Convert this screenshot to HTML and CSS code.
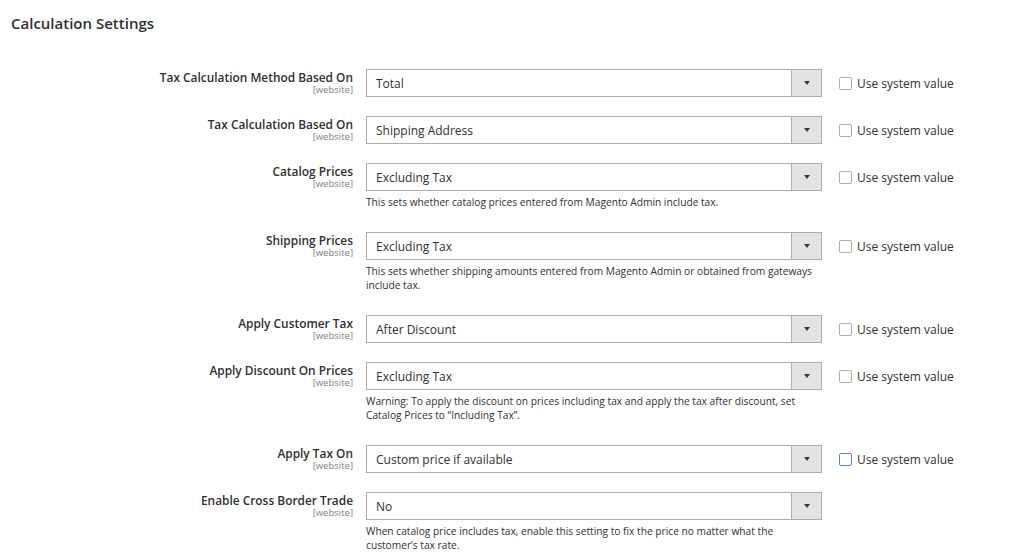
FILE: index.html
```html
<!DOCTYPE html>
<html>
<head>
    <title>Calculation Settings</title>
    <link rel="stylesheet" href="styles.css">
</head>
<body>
    <h2 class="section-title">Calculation Settings</h2>

    <div class="config-form">
        <div class="row">
            <div class="label">Tax Calculation Method Based On<span class="scope">[website]</span></div>
            <div class="field">
                <div class="select"><span class="value">Total</span><span class="arrow"></span></div>
            </div>
            <label class="use-default"><span class="checkbox"></span>Use system value</label>
        </div>

        <div class="row">
            <div class="label">Tax Calculation Based On<span class="scope">[website]</span></div>
            <div class="field">
                <div class="select"><span class="value">Shipping Address</span><span class="arrow"></span></div>
            </div>
            <label class="use-default"><span class="checkbox"></span>Use system value</label>
        </div>

        <div class="row">
            <div class="label">Catalog Prices<span class="scope">[website]</span></div>
            <div class="field">
                <div class="select"><span class="value">Excluding Tax</span><span class="arrow"></span></div>
                <p class="note">This sets whether catalog prices entered from Magento Admin include tax.</p>
            </div>
            <label class="use-default"><span class="checkbox"></span>Use system value</label>
        </div>

        <div class="row">
            <div class="label">Shipping Prices<span class="scope">[website]</span></div>
            <div class="field">
                <div class="select"><span class="value">Excluding Tax</span><span class="arrow"></span></div>
                <p class="note">This sets whether shipping amounts entered from Magento Admin or obtained from gateways include tax.</p>
            </div>
            <label class="use-default"><span class="checkbox"></span>Use system value</label>
        </div>

        <div class="row">
            <div class="label">Apply Customer Tax<span class="scope">[website]</span></div>
            <div class="field">
                <div class="select"><span class="value">After Discount</span><span class="arrow"></span></div>
            </div>
            <label class="use-default"><span class="checkbox"></span>Use system value</label>
        </div>

        <div class="row">
            <div class="label">Apply Discount On Prices<span class="scope">[website]</span></div>
            <div class="field">
                <div class="select"><span class="value">Excluding Tax</span><span class="arrow"></span></div>
                <p class="note">Warning: To apply the discount on prices including tax and apply the tax after discount, set Catalog Prices to “Including Tax”.</p>
            </div>
            <label class="use-default"><span class="checkbox"></span>Use system value</label>
        </div>

        <div class="row">
            <div class="label">Apply Tax On<span class="scope">[website]</span></div>
            <div class="field">
                <div class="select"><span class="value">Custom price if available</span><span class="arrow"></span></div>
            </div>
            <label class="use-default"><span class="checkbox focused"></span>Use system value</label>
        </div>

        <div class="row">
            <div class="label">Enable Cross Border Trade<span class="scope">[website]</span></div>
            <div class="field">
                <div class="select"><span class="value">No</span><span class="arrow"></span></div>
                <p class="note">When catalog price includes tax, enable this setting to fix the price no matter what the customer’s tax rate.</p>
            </div>
        </div>
    </div>
</body>
</html>
```

FILE: styles.css
```css
body {
    margin: 0;
    background: #fff;
    color: #303030;
    font-family: "Open Sans", Arial, sans-serif;
}

.section-title {
    margin: 13px 0 0 11px;
    font-size: 15px;
    line-height: 20px;
    font-weight: 600;
    color: #303030;
}

.config-form {
    display: flex;
    flex-direction: column;
    gap: 19px;
    margin-top: 36px;
}

.row {
    display: flex;
    align-items: flex-start;
}

.label {
    width: 353px;
    flex-shrink: 0;
    text-align: right;
    font-size: 11.9px;
    line-height: 16px;
    font-weight: 600;
    color: #303030;
}

.scope {
    display: block;
    font-size: 9.5px;
    line-height: 9px;
    font-weight: 400;
    color: #808080;
}

.field {
    width: 456px;
    margin-left: 13px;
    flex-shrink: 0;
}

.select {
    display: flex;
    height: 28px;
    box-sizing: border-box;
    border: 1px solid #adadad;
    background: #fff;
}

.select .value {
    flex: 1;
    padding-left: 9px;
    font-size: 12px;
    line-height: 27px;
    color: #303030;
}

.select .arrow {
    width: 29px;
    border-left: 1px solid #adadad;
    background: #e3e3e3;
    display: flex;
    align-items: center;
    justify-content: center;
}

.select .arrow::after {
    content: "";
    border-left: 3px solid transparent;
    border-right: 3px solid transparent;
    border-top: 4px solid #41362f;
}

.note {
    margin: 4px 0 4px;
    font-size: 10.2px;
    line-height: 14px;
    color: #303030;
}

.use-default {
    display: flex;
    align-items: center;
    gap: 5px;
    margin-left: 17px;
    height: 28px;
    font-size: 12px;
    color: #303030;
}

.checkbox {
    width: 13px;
    height: 13px;
    box-sizing: border-box;
    border: 1px solid #adadad;
    border-radius: 2px;
    background: #fff;
}

.checkbox.focused {
    border-color: #4a86d8;
}
```
